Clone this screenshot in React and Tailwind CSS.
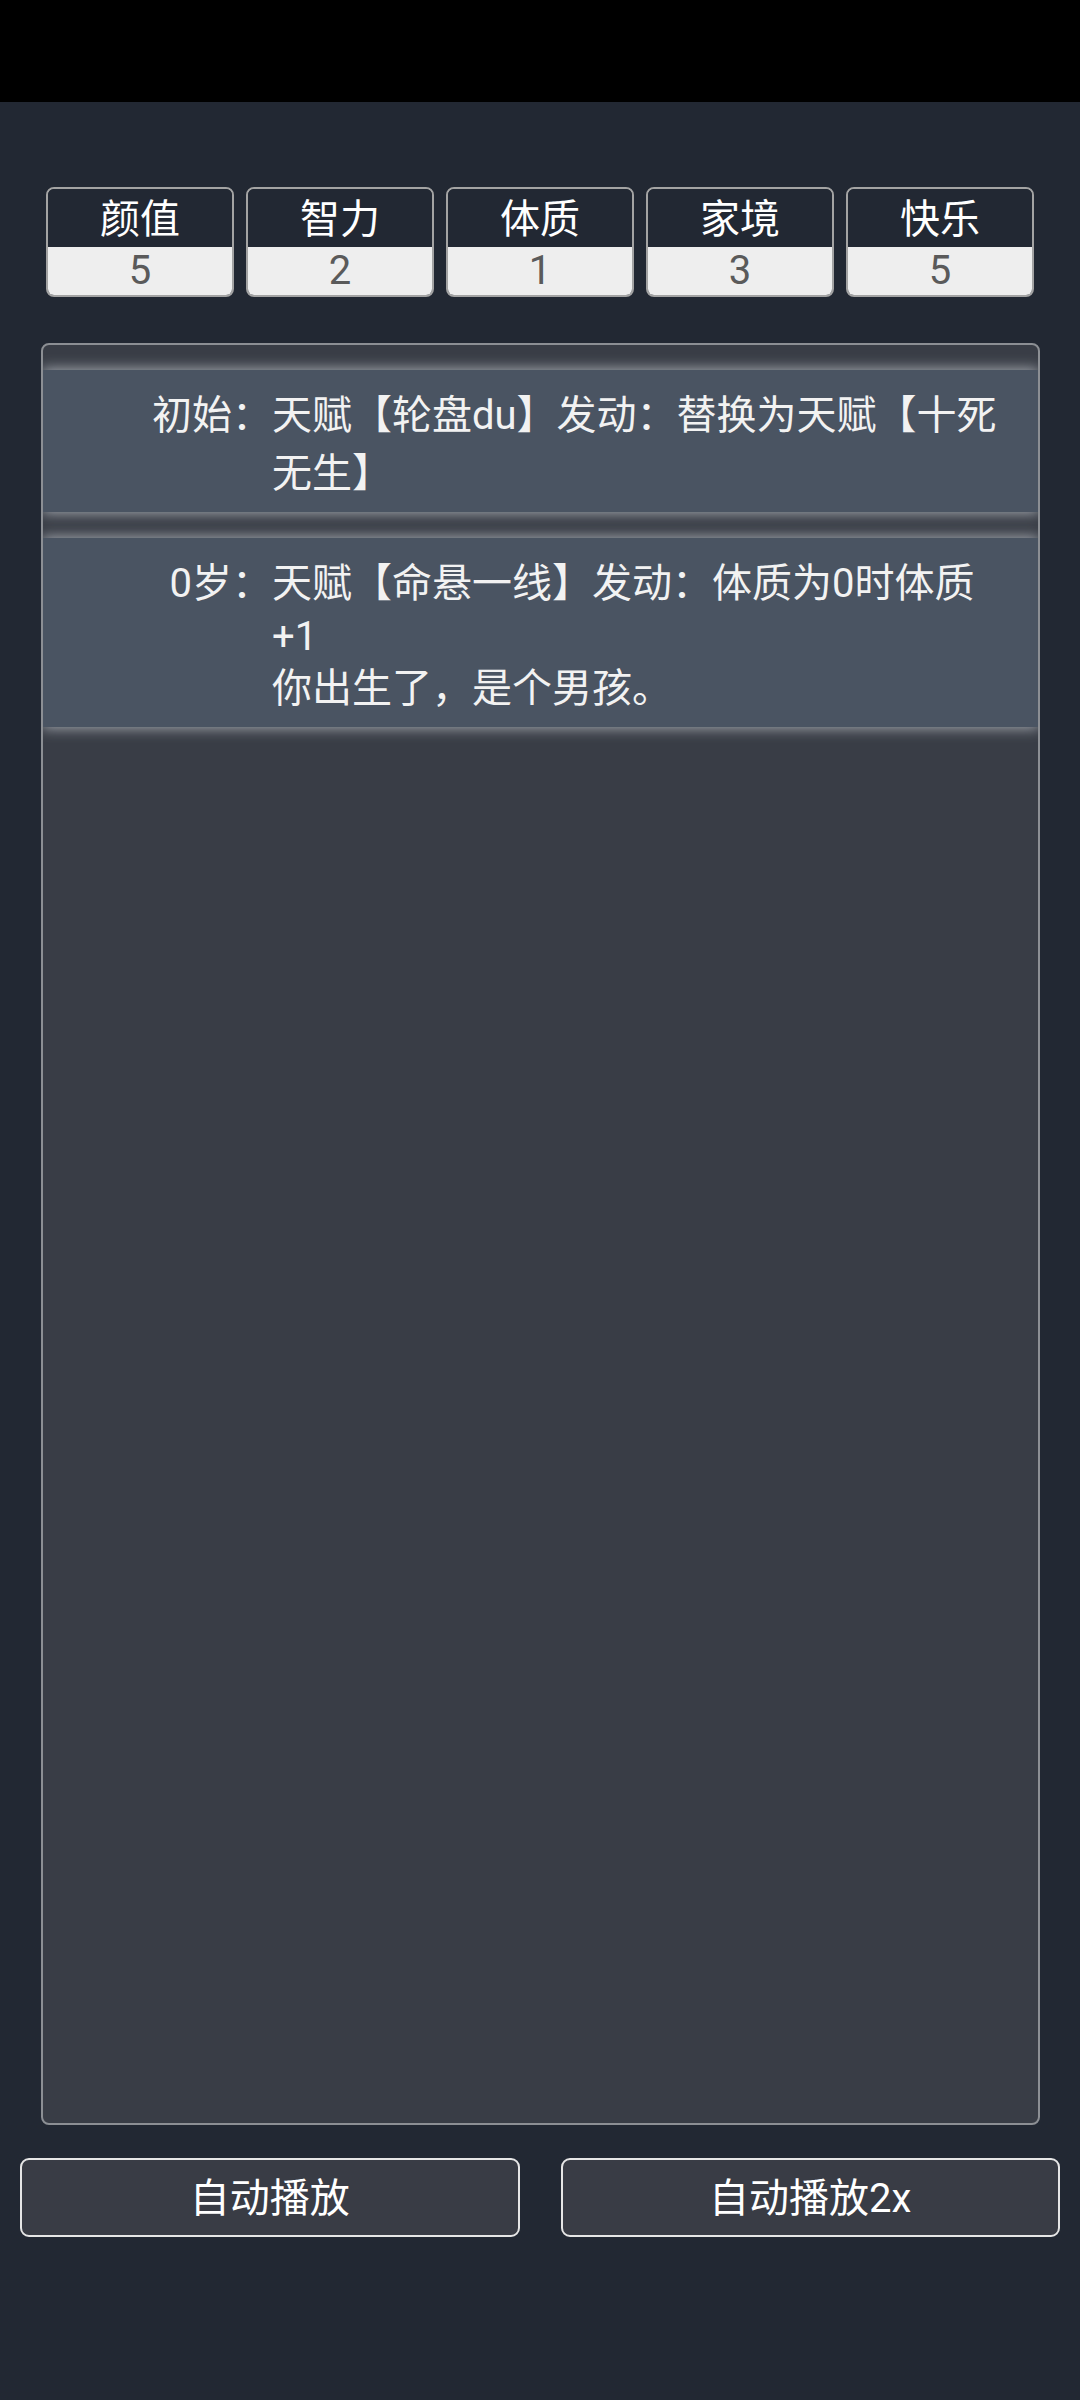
import React from "react";

const font = { fontFamily: 'Roboto, "Noto Sans CJK SC", sans-serif' };

const stats = [
  ["颜值", "5"],
  ["智力", "2"],
  ["体质", "1"],
  ["家境", "3"],
  ["快乐", "5"],
];

function Entry({ label, children }) {
  return (
    <li className="flex pt-[17px] pb-[9px] bg-[#4a5462] shadow-[0_0_13px_1px_rgba(195,200,206,0.8)] text-[40px] leading-[58px] text-[#f2f2f2]">
      <span className="w-[229px] shrink-0 text-right">{label}</span>
      <div className="flex-1 pr-[30px]">{children}</div>
    </li>
  );
}

export default function App() {
  return (
    <div className="h-[2400px] w-[1080px] bg-[#222833] flex flex-col" style={font}>
      <div className="h-[102px] bg-black shrink-0" />
      <div className="mt-[85px] px-[46px] grid grid-cols-5 gap-[12px]">
        {stats.map(([k, v]) => (
          <div key={k} className="border-2 border-[#a3a3a3] rounded-[8px] overflow-hidden">
            <div className="bg-[#222833] text-white text-[40px] pt-[3px] leading-[55px] text-center">{k}</div>
            <div className="bg-[#eeeeee] text-[#5a5a5a] text-[40px] leading-[48px] text-center">{v}</div>
          </div>
        ))}
      </div>
      <div className="mt-[46px] mx-[41px] mr-[40px] h-[1782px] border-2 border-[#8c8f94] rounded-[8px] bg-[#393d46] overflow-hidden">
        <ul className="flex flex-col gap-[26px] pt-[25px]">
          <Entry label="初始：">天赋【轮盘du】发动：替换为天赋【十死无生】</Entry>
          <Entry label="0岁：">
            <div>天赋【命悬一线】发动：体质为0时体质</div>
            <div className="leading-[47px]">+1</div>
            <div>你出生了，是个男孩。</div>
          </Entry>
        </ul>
      </div>
      <div className="mt-[33px] px-[20px] grid grid-cols-2 gap-[41px]">
        <button className="h-[79px] pt-[3px] border-2 border-[#e6e6e6] rounded-[9px] bg-[#393c45] text-white text-[40px]">自动播放</button>
        <button className="h-[79px] pt-[3px] border-2 border-[#e6e6e6] rounded-[9px] bg-[#393c45] text-white text-[40px]">自动播放2x</button>
      </div>
    </div>
  );
}
